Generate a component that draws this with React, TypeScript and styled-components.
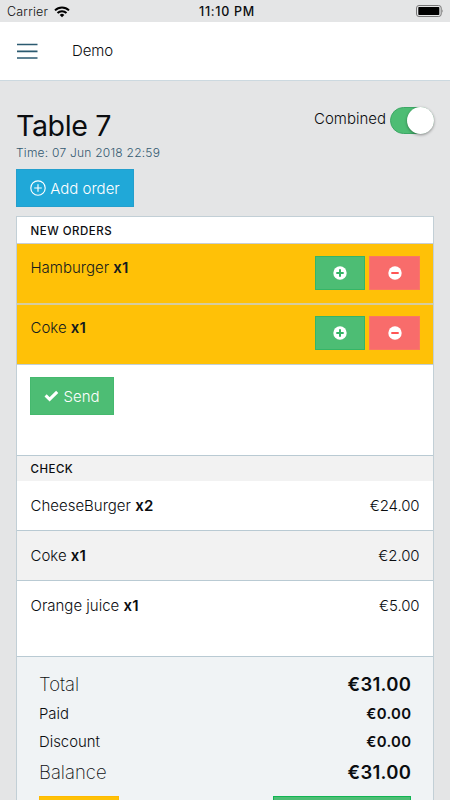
import React from "react";
import styled, { createGlobalStyle } from "styled-components";

const GlobalStyle = createGlobalStyle`
  * { box-sizing: border-box; }
  body {
    margin: 0;
    background: #e4e5e6;
    color: #0b0d10;
    font-family: Inter, "Liberation Sans", sans-serif;
    font-size: 15px;
    font-weight: 330;
  }
`;

const Screen = styled.div`
  width: 450px;
  height: 800px;
  overflow: hidden;
  background: #e4e5e6;
`;

const StatusBar = styled.div`
  display: grid;
  grid-template-columns: 1fr auto 1fr;
  align-items: center;
  height: 22px;
  padding: 1px 6px 0 7px;
  font-size: 12.5px;
  font-weight: 400;
`;

const Carrier = styled.span`
  display: flex;
  align-items: center;
  gap: 6px;
  color: #111;
  font-weight: 330;
  letter-spacing: 0.2px;
`;

const Clock = styled.span`
  font-weight: 500;
  letter-spacing: 0.7px;
  margin-right: -3px;
`;

const Battery = styled.svg`
  justify-self: end;
  display: block;
`;

const Header = styled.header`
  display: flex;
  align-items: center;
  gap: 34px;
  height: 59px;
  padding: 0 17px 1px;
  border-bottom: 1px solid #ccd9e0;
  background: #fff;
`;

const Brand = styled.span`
  font-size: 15px;
  letter-spacing: -0.1px;
`;

const Content = styled.main`
  padding: 25px 16px 0;
`;

const TopRow = styled.div`
  display: flex;
  justify-content: space-between;
  align-items: flex-start;
`;

const Title = styled.h1`
  margin: 0;
  font-size: 28.6px;
  line-height: 40px;
  font-weight: 400;
  letter-spacing: -0.4px;
`;

const Time = styled.div`
  font-size: 12px;
  line-height: 14px;
  color: #335970;
  letter-spacing: 0.23px;
`;

const Toggle = styled.label`
  display: flex;
  align-items: center;
  gap: 4px;
  padding-top: 1px;
  line-height: 26px;
`;

const ToggleText = styled.span`
  margin-top: -3px;
`;

const Track = styled.span`
  display: flex;
  justify-content: flex-end;
  width: 44px;
  height: 27px;
  border: 1px solid #3da766;
  border-radius: 14px;
  background: #4dbd74;
`;

const Knob = styled.span`
  flex: none;
  width: 27px;
  height: 27px;
  margin: -1px;
  border-radius: 50%;
  background: #fff;
  box-shadow: 0 1px 3px rgba(0, 0, 0, 0.4);
`;

const Button = styled.button<{ $bg: string; $edge: string; $w: number; $h: number }>`
  display: flex;
  align-items: center;
  justify-content: center;
  gap: 4px;
  width: ${(p) => p.$w}px;
  height: ${(p) => p.$h}px;
  padding: 0;
  border: 1px solid ${(p) => p.$edge};
  background: ${(p) => p.$bg};
  color: #fff;
  font: inherit;
  white-space: nowrap;
`;

const AddSlot = styled.div`
  padding: 9px 0;
`;

const Card = styled.section`
  height: 620px;
  border: 1px solid #c2cfd6;
  background: #fff;
`;

const SectionTitle = styled.h2<{ $shaded?: boolean }>`
  margin: 0;
  height: ${(p) => (p.$shaded ? 25 : 26)}px;
  padding-left: 13.5px;
  font-size: 11.5px;
  line-height: ${(p) => (p.$shaded ? 26 : 28)}px;
  font-weight: 500;
  letter-spacing: 0.5px;
  background: ${(p) => (p.$shaded ? "#f2f2f2" : "#fff")};
`;

const OrderRow = styled.div`
  display: flex;
  justify-content: space-between;
  height: 60px;
  padding: 12px 13px 0 13.5px;
  border-top: 1px solid #c8ced3;
  background: #ffc107;
  color: #151b1e;
  line-height: 24px;

  & + & {
    height: 61px;
    padding-top: 11px;
    border-top: 2px solid #d6cda0;
  }
`;

const Actions = styled.div`
  display: flex;
  gap: 4px;
`;

const SendArea = styled.div`
  height: 92px;
  padding: 12px 13px;
  border-top: 1px solid #c2cfd6;
  border-bottom: 1px solid #b9cad3;
`;

const CheckRow = styled.div<{ $h: number; $shaded?: boolean }>`
  display: flex;
  justify-content: space-between;
  height: ${(p) => p.$h}px;
  padding: 13px 13.5px 0;
  border-bottom: 1px solid #b9cad3;
  background: ${(p) => (p.$shaded ? "#f2f2f2" : "#fff")};
  line-height: 23px;
`;

const Quantity = styled.b`
  font-weight: 600;
  letter-spacing: 0.2px;
`;

const Price = styled.span`
  letter-spacing: -0.1px;
`;

const Summary = styled.div`
  height: 200px;
  padding: 10.5px 22px 0 22px;
  background: #f0f3f5;
`;

const SummaryRow = styled.div<{ $big?: boolean }>`
  display: flex;
  justify-content: space-between;
  align-items: center;
  height: ${(p) => (p.$big ? 32.5 : 28)}px;
  font-size: ${(p) => (p.$big ? 18.5 : 14.9)}px;
  font-weight: ${(p) => (p.$big ? 230 : 330)};
`;

const Amount = styled.span`
  font-weight: 600;
  letter-spacing: 0.3px;
  margin-right: -0.3px;
`;

const PayActions = styled.div`
  display: flex;
  justify-content: space-between;
  padding-top: 7.5px;
`;

const MenuIcon = () => (
  <svg width="21" height="16" viewBox="0 0 21 16">
    <path d="M0 1.5h20.5M0 8.4h20.5M0 15h20.5" stroke="#2b5a70" strokeWidth="1.6" />
  </svg>
);

const WifiIcon = () => (
  <svg width="16" height="12" viewBox="0 0 16 12" fill="none" stroke="#000" strokeWidth="2">
    <path d="M1 4.4a10 10 0 0 1 14 0M3.5 7a6.5 6.5 0 0 1 9 0" />
    <path d="M8 11.2 5.7 8.9a3.3 3.3 0 0 1 4.6 0Z" fill="#000" stroke="none" />
  </svg>
);

const BatteryIcon = () => (
  <Battery width="28" height="13" viewBox="0 0 28 13">
    <rect x="0.5" y="0.5" width="24.7" height="11" rx="2.5" fill="none" stroke="#777" />
    <rect x="2.3" y="2" width="21" height="8" rx="0.7" />
    <path d="M26.4 4.2q1.3 1.8 0 3.6z" fill="#777" />
  </Battery>
);

const OutlinePlus = () => (
  <svg width="16" height="16" viewBox="0 0 16 16" fill="none" stroke="#fff" strokeWidth="1.15">
    <circle cx="8" cy="8" r="7.2" />
    <path d="M8 4.2v7.6M4.2 8h7.6" />
  </svg>
);

const CheckIcon = () => (
  <svg width="15" height="12" viewBox="0 0 15 12" fill="none" stroke="#fff" strokeWidth="3.1">
    <path d="M1.6 5.4 5.6 9.3 13.2 1.8" />
  </svg>
);

const RoundIcon = ({ color, plus }: { color: string; plus?: boolean }) => (
  <svg width="14" height="14" viewBox="0 0 14 14">
    <circle cx="7" cy="7" r="6.7" fill="#fff" />
    <path d={plus ? "M7 3.3v7.4M3.3 7h7.4" : "M3.3 7h7.4"} stroke={color} strokeWidth="2" />
  </svg>
);

const newOrders = [
  { name: "Hamburger", count: 1 },
  { name: "Coke", count: 1 },
];

const checkItems = [
  { name: "CheeseBurger", count: 2, price: "€24.00", height: 50 },
  { name: "Coke", count: 1, price: "€2.00", height: 50, shaded: true },
  { name: "Orange juice", count: 1, price: "€5.00", height: 76 },
];

const totals = [
  { label: "Total", value: "€31.00", big: true },
  { label: "Paid", value: "€0.00" },
  { label: "Discount", value: "€0.00" },
  { label: "Balance", value: "€31.00", big: true },
];

export default function App() {
  return (
    <Screen>
      <GlobalStyle />
      <StatusBar>
        <Carrier>
          Carrier <WifiIcon />
        </Carrier>
        <Clock>11:10 PM</Clock>
        <BatteryIcon />
      </StatusBar>
      <Header>
        <MenuIcon />
        <Brand>Demo</Brand>
      </Header>
      <Content>
        <TopRow>
          <div>
            <Title>Table 7</Title>
            <Time>Time: 07 Jun 2018 22:59</Time>
          </div>
          <Toggle>
            <ToggleText>Combined</ToggleText>
            <Track>
              <Knob />
            </Track>
          </Toggle>
        </TopRow>
        <AddSlot>
          <Button $bg="#20a8d8" $edge="#249fcd" $w={118} $h={38}>
            <OutlinePlus />
            Add order
          </Button>
        </AddSlot>
        <Card>
          <SectionTitle>NEW ORDERS</SectionTitle>
          {newOrders.map((o) => (
            <OrderRow key={o.name}>
              <span>
                {o.name} <Quantity>x{o.count}</Quantity>
              </span>
              <Actions>
                <Button $bg="#4dbd74" $edge="#35b567" $w={50} $h={34}>
                  <RoundIcon color="#35b567" plus />
                </Button>
                <Button $bg="#f86c6b" $edge="#f97763" $w={51} $h={34}>
                  <RoundIcon color="#f55" />
                </Button>
              </Actions>
            </OrderRow>
          ))}
          <SendArea>
            <Button $bg="#4dbd74" $edge="#45b96e" $w={84} $h={38}>
              <CheckIcon />
              Send
            </Button>
          </SendArea>
          <SectionTitle $shaded>CHECK</SectionTitle>
          {checkItems.map((c) => (
            <CheckRow key={c.name} $h={c.height} $shaded={c.shaded}>
              <span>
                {c.name} <Quantity>x{c.count}</Quantity>
              </span>
              <Price>{c.price}</Price>
            </CheckRow>
          ))}
          <Summary>
            {totals.map((t) => (
              <SummaryRow key={t.label} $big={t.big}>
                <span>{t.label}</span>
                <Amount>{t.value}</Amount>
              </SummaryRow>
            ))}
            <PayActions>
              <Button $bg="#ffc107" $edge="#ffba00" $w={80} $h={38} />
              <Button $bg="#4dbd74" $edge="#10b552" $w={138} $h={38} />
            </PayActions>
          </Summary>
        </Card>
      </Content>
    </Screen>
  );
}
